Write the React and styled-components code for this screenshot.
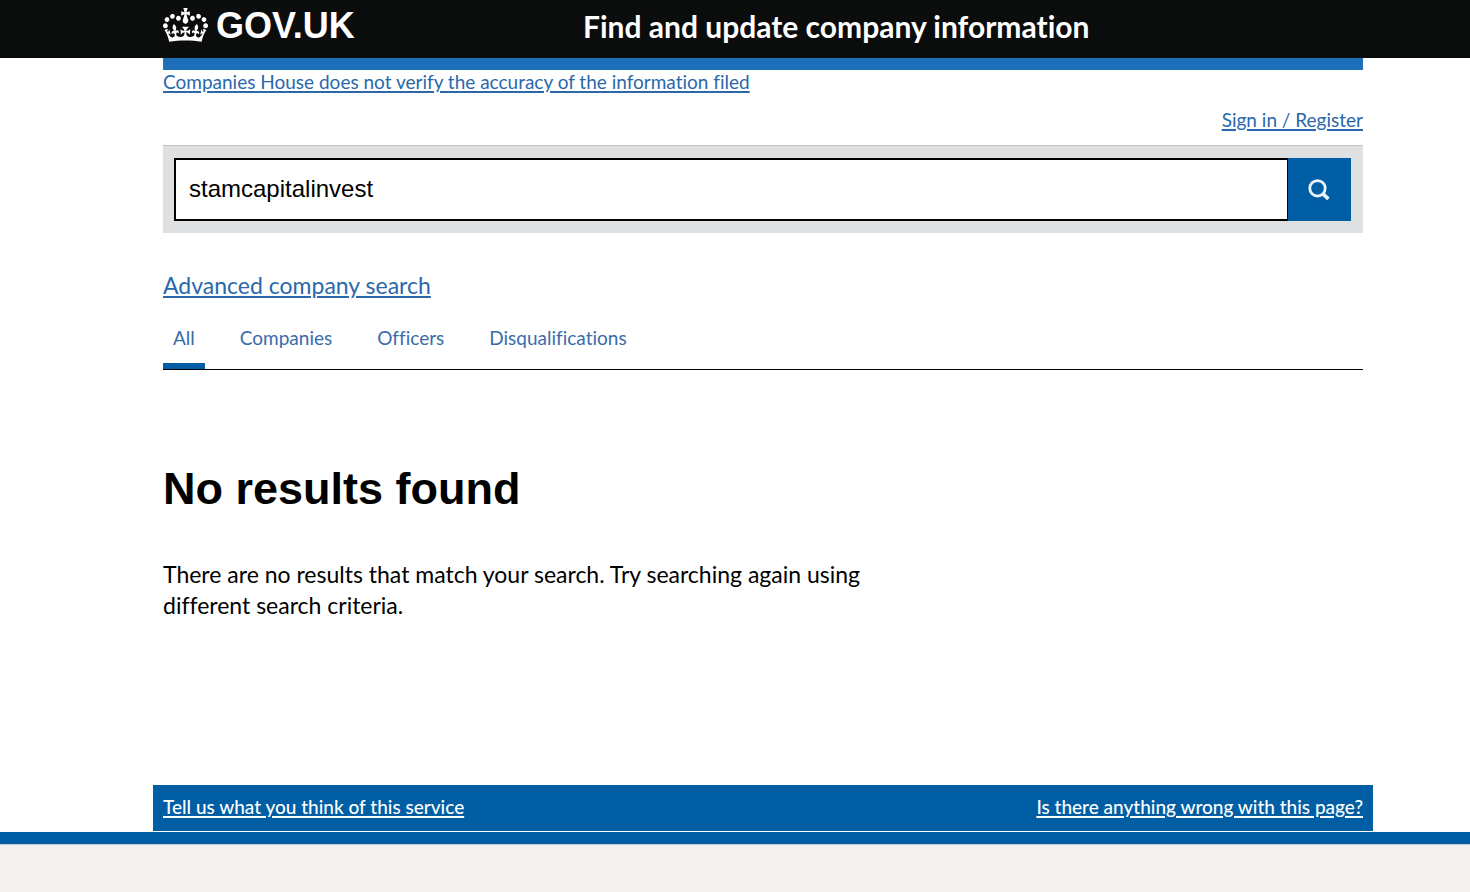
import React from 'react';
import styled, { createGlobalStyle } from 'styled-components';

const GlobalStyle = createGlobalStyle`
  *, *::before, *::after { box-sizing: border-box; }
  body {
    margin: 0;
    background: #fff;
    color: #000;
    font-family: Lato, "Liberation Sans", sans-serif;
    font-size: 19px;
    font-variant-ligatures: none;
    line-height: 24px;
  }
`;

const Page = styled.div`
  display: flex;
  flex-direction: column;
  min-height: 100vh;
`;

const Container = styled.div`
  margin: 0 107px 0 163px;
`;

const Header = styled.header`
  background: #0b0c0c;
`;

const HeaderRow = styled(Container)`
  display: flex;
  align-items: flex-start;
  height: 58px;
`;

const LogoCell = styled.div`
  flex: 0 0 35%;
  padding-top: 8px;
`;

const LogoLink = styled.a`
  display: flex;
  align-items: flex-start;
  gap: 8px;
  color: #fff;
  font: bold 36px/36px "Liberation Sans", Arial, sans-serif;
  text-decoration: none;
`;

const ServiceName = styled.a`
  padding-top: 8px;
  color: #fff;
  font-size: 30px;
  font-weight: 700;
  line-height: 36px;
  text-decoration: none;
  white-space: nowrap;
`;

const Notice = styled.div`
  border-top: 12px solid #1d70b8;
`;

const TextLink = styled.a`
  color: ${(p) => (p.$inverse ? '#fff' : '#2a68ab')};
  font-size: ${(p) => (p.$large ? 23 : 19)}px;
  font-weight: ${(p) => (p.$inverse ? 500 : 400)};
  text-decoration: underline;
  text-decoration-thickness: 2px;
  text-underline-offset: 2px;
`;

const Account = styled.nav`
  display: flex;
  justify-content: flex-end;
  padding: 14px 0 13px;
`;

const SearchForm = styled.form`
  display: flex;
  padding: 12px 12px 12px 11px;
  border-top: 1px solid #bfc1c3;
  background: #dee0e2;
`;

const SearchInput = styled.input`
  flex: 1;
  min-width: 0;
  height: 63px;
  padding: 0 13px 2px;
  border: 2px solid #000;
  border-right-width: 1px;
  border-radius: 0;
  background: #fff;
  color: #000;
  font: 24px "Liberation Sans", Arial, sans-serif;
  outline: none;
`;

const SearchButton = styled.button`
  display: flex;
  align-items: center;
  justify-content: center;
  width: 63px;
  height: 63px;
  padding: 0 2px 0 0;
  border: 0;
  background: #005ea5;
`;

const Advanced = styled.p`
  margin: 37px 0 0;
  line-height: 30px;
`;

const Tabs = styled.nav`
  display: flex;
  gap: 25px;
  margin-top: 24px;
  border-bottom: 1px solid #000;
`;

const Tab = styled.a`
  padding: 0 10px 13px;
  border-bottom: 6px solid ${(p) => (p.$active ? '#005ea5' : 'transparent')};
  color: #3a6cab;
  text-decoration: none;
`;

const Results = styled.main`
  width: 66%;
  padding: 94px 30px 164px 0;
`;

const Title = styled.h1`
  margin: 0 0 45px;
  font: bold 45px/50px "Liberation Sans", Arial, sans-serif;
`;

const Message = styled.p`
  margin: 0;
  font-size: 23px;
  line-height: 31px;
`;

const Feedback = styled.div`
  display: flex;
  justify-content: space-between;
  margin: 0 97px 1px 153px;
  padding: 10px 10px 12px;
  background: #005ea5;
`;

const Footer = styled.footer`
  flex: 1;
  min-height: 60px;
  border-top: 12px solid #005ea5;
  background: #f3f2f1;
  box-shadow: inset 0 1px 0 #c3cdd5;
`;

const Crown = () => (
  <svg width="45" height="34" viewBox="0 0 132 97" preserveAspectRatio="none" fill="currentColor" fillRule="evenodd" aria-hidden="true">
    <path d="M25 30.2c3.5 1.5 7.7-.2 9.1-3.7 1.5-3.6-.2-7.8-3.9-9.2-3.6-1.4-7.6.3-9.1 3.9-1.4 3.5.3 7.5 3.9 9zM9 39.5c3.6 1.5 7.8-.2 9.2-3.7 1.5-3.6-.2-7.8-3.9-9.1-3.6-1.5-7.6.2-9.1 3.8-1.4 3.5.3 7.5 3.8 9zM4.4 57.2c3.5 1.5 7.7-.2 9.1-3.8 1.5-3.6-.2-7.7-3.9-9.1-3.5-1.5-7.6.3-9.1 3.8-1.4 3.5.3 7.6 3.9 9.1zm38.3-21.4c3.5 1.5 7.7-.2 9.1-3.8 1.5-3.6-.2-7.7-3.9-9.1-3.6-1.5-7.6.3-9.1 3.8-1.3 3.6.4 7.7 3.9 9.1zm64.4-5.6c-3.6 1.5-7.8-.2-9.1-3.7-1.5-3.6.2-7.8 3.8-9.2 3.6-1.4 7.7.3 9.2 3.9 1.3 3.5-.4 7.5-3.9 9zm15.9 9.3c-3.6 1.5-7.7-.2-9.1-3.7-1.5-3.6.2-7.8 3.7-9.1 3.6-1.5 7.7.2 9.2 3.8 1.5 3.5-.3 7.5-3.8 9zm4.7 17.7c-3.6 1.5-7.8-.2-9.2-3.8-1.5-3.6.2-7.7 3.9-9.1 3.6-1.5 7.7.3 9.2 3.8 1.3 3.5-.4 7.6-3.9 9.1zM89.3 35.8c-3.6 1.5-7.8-.2-9.2-3.8-1.4-3.6.2-7.7 3.9-9.1 3.6-1.5 7.7.3 9.2 3.8 1.4 3.6-.3 7.7-3.9 9.1zM69.7 17.7l8.9 4.7V9.3l-8.9 2.8c-.2-.3-.5-.6-.9-.9L72.4 0H59.6l3.5 11.2c-.3.3-.6.5-.9.9l-8.8-2.8v13.1l8.8-4.7c.3.3.6.7.9.9l-5 15.4v.1c-.2.8-.4 1.6-.4 2.4 0 4.1 3.1 7.5 7 8.1h.2c.3 0 .7.1 1 .1.4 0 .7 0 1-.1h.2c4-.6 7.1-4.1 7.1-8.1 0-.8-.1-1.7-.4-2.4V34l-5.1-15.4c.4-.2.7-.6 1-.9zM66 92.8c16.9 0 32.8 1.1 47.1 3.2 4-16.9 8.9-26.7 14-33.5l-9.6-3.4c1 4.9 1.1 7.2 0 10.2-1.5-1.4-3-4.3-4.2-8.7L108.6 76c2.8-2 5-3.2 7.5-3.3-4.4 9.4-10 11.9-13.6 11.2-4.3-.8-6.3-4.6-5.6-7.9 1-4.7 5.7-5.9 8-.5 4.3-8.7-3-11.4-7.6-8.8 7.1-7.2 7.9-13.5 2.1-21.1-8 6.1-8.1 12.3-4.5 20.8-4.7-5.4-12.1-2.5-9.5 6.2 3.4-5.2 7.9-2 7.2 3.1-.6 4.3-6.4 7.8-13.5 7.2-10.3-.9-10.9-8-11.2-13.8 2.5-.5 7.1 1.8 11 7.3L80.2 60c-4.1 4.4-8 5.3-12.3 5.4 1.4-4.4 8-11.6 8-11.6H55.5s6.4 7.2 7.9 11.6c-4.2-.1-8-1-12.3-5.4l1.4 16.4c3.9-5.5 8.5-7.7 10.9-7.3-.3 5.8-.9 12.8-11.1 13.8-7.2.6-12.9-2.9-13.5-7.2-.7-5 3.8-8.3 7.1-3.1 2.7-8.7-4.6-11.6-9.4-6.2 3.7-8.5 3.6-14.7-4.6-20.8-5.8 7.6-5 13.9 2.2 21.1-4.7-2.6-11.9.1-7.7 8.8 2.3-5.5 7.1-4.2 8.1.5.7 3.3-1.3 7.1-5.7 7.9-3.5.7-9-1.8-13.5-11.2 2.5.1 4.7 1.3 7.5 3.3l-4.7-15.4c-1.2 4.4-2.7 7.2-4.3 8.7-1.1-3-.9-5.3 0-10.2l-9.5 3.4c5 6.9 9.9 16.7 14 33.5 14.8-2.1 30.8-3.2 47.7-3.2z" />
  </svg>
);

const SearchIcon = () => (
  <svg width="22" height="22" viewBox="0 0 22 22" fill="none" stroke="#eaf3fa" aria-hidden="true">
    <circle cx="9.5" cy="9.3" r="7.7" strokeWidth="2.8" />
    <path d="M15 14.8l5.4 5.2" strokeWidth="3.8" />
  </svg>
);

const tabs = ['All', 'Companies', 'Officers', 'Disqualifications'];

export default function App() {
  return (
    <Page>
      <GlobalStyle />
      <Header>
        <HeaderRow>
          <LogoCell>
            <LogoLink href="#home"><Crown />GOV.UK</LogoLink>
          </LogoCell>
          <ServiceName href="#service">Find and update company information</ServiceName>
        </HeaderRow>
      </Header>
      <Container>
        <Notice>
          <TextLink href="#accuracy">Companies House does not verify the accuracy of the information filed</TextLink>
        </Notice>
        <Account aria-label="Account">
          <TextLink href="#signin">Sign in / Register</TextLink>
        </Account>
        <SearchForm role="search" onSubmit={(e) => e.preventDefault()}>
          <SearchInput type="text" name="q" aria-label="Search companies and officers" defaultValue="stamcapitalinvest" spellCheck={false} />
          <SearchButton type="submit" aria-label="Search"><SearchIcon /></SearchButton>
        </SearchForm>
        <Advanced>
          <TextLink $large href="#advanced">Advanced company search</TextLink>
        </Advanced>
        <Tabs aria-label="Result types">
          {tabs.map((name, i) => (
            <Tab key={name} href={`#${name.toLowerCase()}`} $active={i === 0} aria-current={i === 0 ? 'page' : undefined}>{name}</Tab>
          ))}
        </Tabs>
        <Results>
          <Title>No results found</Title>
          <Message>There are no results that match your search. Try searching again using different search criteria.</Message>
        </Results>
      </Container>
      <Feedback>
        <TextLink $inverse href="#feedback">Tell us what you think of this service</TextLink>
        <TextLink $inverse href="#problem">Is there anything wrong with this page?</TextLink>
      </Feedback>
      <Footer />
    </Page>
  );
}
